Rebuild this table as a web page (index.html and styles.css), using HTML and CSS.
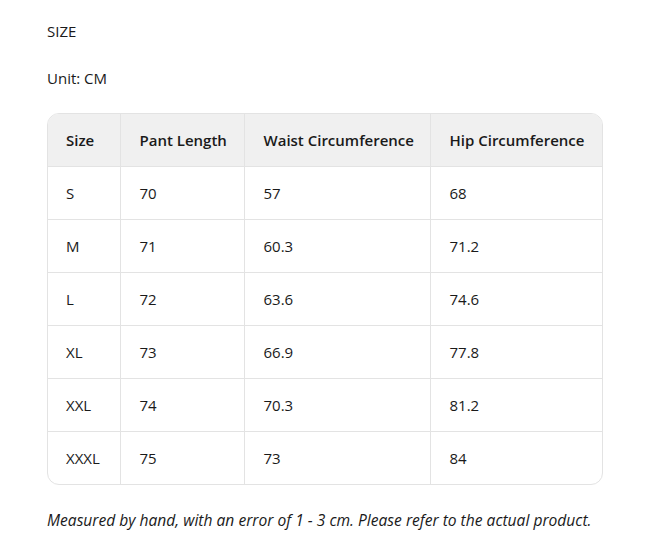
FILE: index.html
```html
<!DOCTYPE html>
<html>
<head>
<meta charset="utf-8">
<link rel="stylesheet" href="styles.css">
</head>
<body>
<p class="title">SIZE</p>
<p class="unit">Unit: CM</p>
<div class="table-wrap">
<table class="size-table">
<thead>
<tr><th class="c1">Size</th><th class="c2">Pant Length</th><th class="c3">Waist Circumference</th><th class="c4">Hip Circumference</th></tr>
</thead>
<tbody>
<tr><td>S</td><td>70</td><td>57</td><td>68</td></tr>
<tr><td>M</td><td>71</td><td>60.3</td><td>71.2</td></tr>
<tr><td>L</td><td>72</td><td>63.6</td><td>74.6</td></tr>
<tr><td>XL</td><td>73</td><td>66.9</td><td>77.8</td></tr>
<tr><td>XXL</td><td>74</td><td>70.3</td><td>81.2</td></tr>
<tr><td>XXXL</td><td>75</td><td>73</td><td>84</td></tr>
</tbody>
</table>
</div>
<p class="note">Measured by hand, with an error of 1 - 3 cm. Please refer to the actual product.</p>
</body>
</html>
```

FILE: styles.css
```css
html, body {
  margin: 0;
  padding: 0;
  background: #fff;
}
body {
  padding: 19px 55px 0 47px;
  font-family: "Open Sans", "Noto Sans", sans-serif;
  font-size: 15px;
  color: #1a1a1a;
}
p {
  margin: 0;
  line-height: 24px;
}
.unit {
  margin-top: 23px;
}
.table-wrap {
  margin-top: 23px;
  width: 554px;
  border: 1px solid #e3e3e3;
  border-radius: 12px;
  overflow: hidden;
}
.size-table {
  width: 100%;
  border-collapse: collapse;
  table-layout: fixed;
}
.size-table th, .size-table td {
  height: 53px;
  padding: 0 0 0 19px;
  text-align: left;
  border-left: 1px solid #e3e3e3;
  border-top: 1px solid #e3e3e3;
  box-sizing: border-box;
}
.size-table tr > :first-child {
  border-left: none;
  padding-left: 18px;
}
.size-table thead th {
  border-top: none;
  background: #f0f0f0;
  font-weight: 600;
  height: 52px;
}
.c1 { width: 72px; }
.c2 { width: 124px; }
.c3 { width: 186px; }
.note {
  margin-top: 23px;
  font-style: italic;
  font-size: 15.6px;
}
```
